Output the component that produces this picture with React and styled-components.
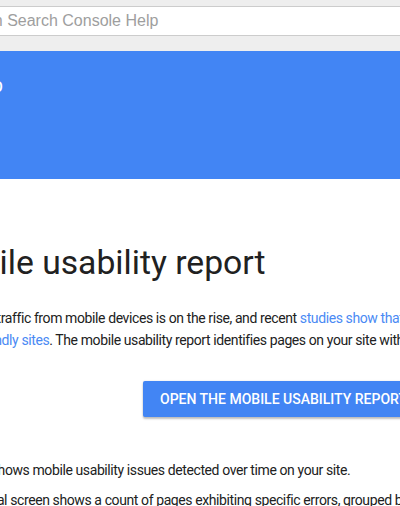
import React from 'react'
import styled, { createGlobalStyle } from 'styled-components'

const Global = createGlobalStyle`
    html, body {
        margin: 0;
        padding: 0;
        background: #ffffff;
        overflow: hidden;
    }

    body {
        width: 400px;
        height: 506px;
        font-family: Roboto, "Liberation Sans", Arial, sans-serif;
        color: #212121;
    }
`;

const TopBar = styled.div`
    height: 51px;
    background-color: #eeeeee;
    padding-top: 6px;
    box-sizing: border-box;
`;

const SearchField = styled.div`
    height: 30px;
    box-sizing: border-box;
    background-color: #ffffff;
    border-top: 1px solid #cccccc;
    border-bottom: 1px solid #cccccc;
    display: flex;
    align-items: center;
    overflow: hidden;

    & > .placeholder {
        margin-left: -48px;
        white-space: nowrap;
        font-family: "Liberation Sans", Arial, sans-serif;
        font-size: 16px;
        color: #9e9e9e;
    }
`;

const Header = styled.div`
    height: 128px;
    background-color: #4285f4;
    display: flex;
    padding-top: 22px;
    box-sizing: border-box;

    & > .title {
        width: 3px;
        display: flex;
        justify-content: flex-end;
        white-space: nowrap;
        color: #ffffff;
        font-size: 20px;
        height: 24px;
        line-height: 24px;
    }
`;

const Content = styled.div`
    margin-left: -68px;
    white-space: nowrap;
`;

const Title = styled.h1`
    margin: 64px 0 24px;
    font-size: 33.7px;
    line-height: 40px;
    font-weight: 400;
    color: #212121;
`;

const Text = styled.p`
    margin: ${props => props.gap || 0}px 0 0;
    font-size: 14px;
    letter-spacing: -0.4px;
    line-height: 22px;
    color: #212121;

    & > a {
        color: #4a8af4;
        text-decoration: none;
    }
`;

const ButtonRow = styled.div`
    display: flex;
    padding-left: 211px;
    margin-top: 30px;
`;

const Button = styled.button`
    height: 36px;
    padding: 0 17px;
    border: none;
    border-radius: 2px;
    background-color: #4285f4;
    color: #ffffff;
    font-family: Roboto, sans-serif;
    font-size: 14px;
    font-weight: 500;
    text-transform: uppercase;
    white-space: nowrap;
    box-shadow: 0 2px 2px rgba(0, 0, 0, 0.24), 0 0 2px rgba(0, 0, 0, 0.12);
`;

const App = () => {
    return (
        <>
            <Global />

            <TopBar>
                <SearchField>
                    <span className="placeholder">Search Search Console Help</span>
                </SearchField>
            </TopBar>

            <Header>
                <div className="title">
                    <span>Search Console Help</span>
                </div>
            </Header>

            <Content>

                <Title>Mobile usability report</Title>

                <Text>
                    Today, site traffic from mobile devices is on the rise, and recent <a href="#">studies show that</a> users are more likely to return to
                    <br />
                    <a href="#">mobile-friendly sites</a>. The mobile usability report identifies pages on your site with usability problems for visitors.
                </Text>

                <ButtonRow>
                    <Button>Open the mobile usability report</Button>
                </ButtonRow>

                <Text gap={42}>
                    The chart shows mobile usability issues detected over time on your site.
                </Text>

                <Text gap={8}>
                    The principal screen shows a count of pages exhibiting specific errors, grouped by error type.
                </Text>

            </Content>
        </>
    )
}

export default App;
